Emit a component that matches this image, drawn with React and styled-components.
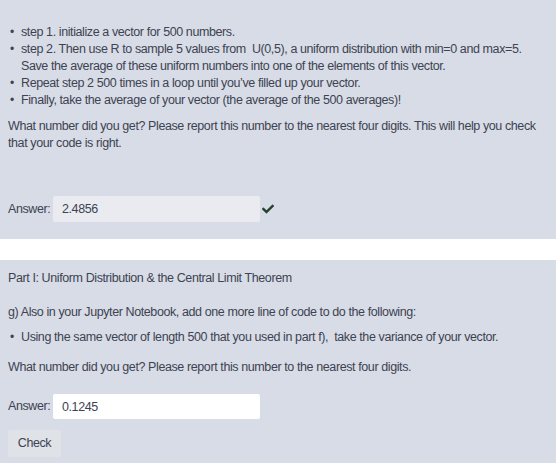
import React from 'react';
import styled, { createGlobalStyle } from 'styled-components';
import { FaCheck } from 'react-icons/fa';

const GlobalStyle = createGlobalStyle`
    body {
        margin: 0;
        background: #ffffff;
        font-family: "Liberation Sans", Arial, Helvetica, sans-serif;
        font-size: 12.5px;
        letter-spacing: -0.4px;
        line-height: 17px;
        color: #3d4352;
    }
`;

const Page = styled.div`
    width: 556px;
    display: flex;
    flex-direction: column;
    gap: 21px;
`;

const Panel = styled.section`
    background: #d8dce6;
    padding: ${props => props.$pad || '8px 8px 17px'};
`;

const Text = styled.p`
    margin: ${props => props.$margin || '0'};
`;

const List = styled.ul`
    list-style: none;
    margin: ${props => props.$margin || '0'};
    padding: 0 0 0 2px;
`;

const Item = styled.li`
    display: flex;
`;

const Bullet = styled.span`
    flex: 0 0 11px;
    font-size: 12px;
    &::before {
        content: '\\2022';
    }
`;

const AnswerRow = styled.div`
    display: flex;
    align-items: center;
    margin-top: ${props => props.$top || '0'};
`;

const Label = styled.span`
    width: 45px;
`;

const Input = styled.input`
    box-sizing: border-box;
    width: 207px;
    height: ${props => props.$h || '26px'};
    border: none;
    border-radius: 2px;
    padding: 0 9px;
    font: inherit;
    letter-spacing: inherit;
    color: #3d4352;
    background: ${props => (props.disabled ? '#e9ebf0' : '#ffffff')};
`;

const Mark = styled.span`
    display: flex;
    margin-left: 2px;
    color: #27422f;
    font-size: 12px;
`;

const Button = styled.button`
    display: block;
    margin-top: 11px;
    width: 53px;
    height: 27px;
    border: none;
    border-radius: 2px;
    background: #dfe2e6;
    font: inherit;
    letter-spacing: inherit;
    color: #3d4352;
    padding: 0;
`;

const App = () => (
    <Page>
        <GlobalStyle />
        <Panel $pad="24px 8px 17px">
            <List>
                <Item><Bullet /><span>step 1. initialize a vector for 500 numbers.</span></Item>
                <Item><Bullet /><span>step 2. Then use R to sample 5 values from &nbsp;U(0,5), a uniform distribution with min=0 and max=5. Save the average of these uniform numbers into one of the elements of this vector.</span></Item>
                <Item><Bullet /><span>Repeat step 2 500 times in a loop until you’ve filled up your vector.</span></Item>
                <Item><Bullet /><span>Finally, take the average of your vector (the average of the 500 averages)!</span></Item>
            </List>
            <Text $margin="9px 0 0">
                What number did you get? Please report this number to the nearest four digits. This will help you check that your code is right.
            </Text>
            <AnswerRow $top="44px">
                <Label>Answer:</Label>
                <Input disabled value="2.4856" readOnly />
                <Mark><FaCheck /></Mark>
            </AnswerRow>
        </Panel>
        <Panel $pad="10px 8px 6px">
            <Text>Part I: Uniform Distribution &amp; the Central Limit Theorem</Text>
            <Text $margin="17px 0 0">g) Also in your Jupyter Notebook, add one more line of code to do the following:</Text>
            <List $margin="8px 0 0">
                <Item><Bullet /><span>Using the same vector of length 500 that you used in part f), &nbsp;take the variance of your vector.</span></Item>
            </List>
            <Text $margin="13px 0 0">What number did you get? Please report this number to the nearest four digits.</Text>
            <AnswerRow $top="18px">
                <Label>Answer:</Label>
                <Input $h="25px" value="0.1245" readOnly />
            </AnswerRow>
            <Button>Check</Button>
        </Panel>
    </Page>
);

export default App;
